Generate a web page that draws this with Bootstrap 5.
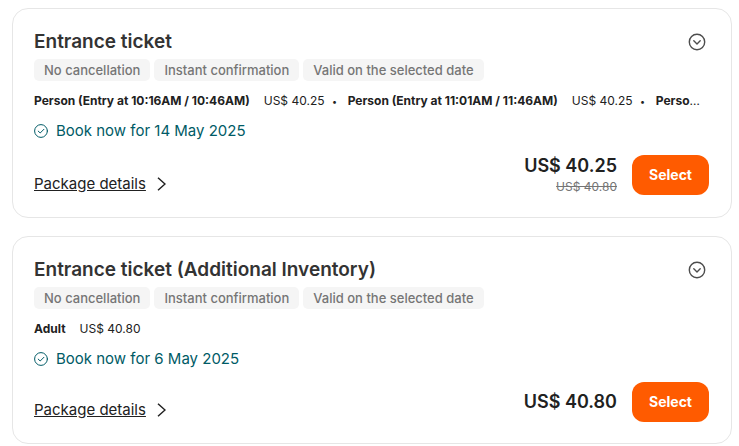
<!DOCTYPE html>
<html lang="en">
<head>
<meta charset="utf-8">
<meta name="viewport" content="width=device-width, initial-scale=1">
<title>Ticket packages</title>
<link href="https://cdn.jsdelivr.net/npm/bootstrap@5.3.0/dist/css/bootstrap.min.css" rel="stylesheet">
<style>
body { font-family: "Inter", sans-serif; color: #212121; background: #fff; }
.package-list { padding: 8px 7px 2px 12px; gap: 18px; }
.package { border: 1px solid #e6e6e6; border-radius: 16px; padding: 19px 22px 21px 21px; }
.package-title { font-size: 19px; line-height: 28px; font-weight: 600; color: #333; }
.toggle { color: #4d4d4d; width: 24px; height: 24px; }
.tag-row { gap: 4px; margin-top: 3px; }
.tag { font-size: 13px; line-height: 22px; font-weight: 500; color: #757575; background: #f5f5f5; border-radius: 5px; padding: 0 10px; }
.options { font-size: 12px; line-height: 20px; margin-top: 10px; margin-right: 5px; }
.options b { font-weight: 700; }
.options .amount { margin-left: 14px; }
.options .dot { font-size: 9px; line-height: 1; margin: 0 8px 0 5px; }
.availability { font-size: 15px; line-height: 20px; margin-top: 10px; gap: 8px; color: #005b66; }
.package-foot { margin-top: 13px; }
.details { font-size: 15px; line-height: 24px; gap: 11px; color: #212121; }
.details:hover { color: #ff5b00; }
.price { font-size: 18px; line-height: 24px; font-weight: 600; }
.old-price { font-size: 12px; line-height: 18px; color: #757575; }
.buy { gap: 15px; }
.btn-select { --bs-btn-color: #fff; --bs-btn-bg: #ff5b00; --bs-btn-hover-color: #fff; --bs-btn-hover-bg: #e65200; --bs-btn-active-color: #fff; --bs-btn-active-bg: #cc4900; font-size: 14px; line-height: 20px; font-weight: 700; padding: 10px 15px; border: 0; border-radius: 12px; min-width: 77px; }
</style>
</head>
<body>
<main class="package-list d-flex flex-column">
  <article class="package">
    <div class="d-flex justify-content-between align-items-center">
      <h2 class="package-title mb-0">Entrance ticket</h2>
      <button type="button" class="toggle btn p-0 border-0 d-flex align-items-center justify-content-center" aria-label="Expand Entrance ticket">
        <svg width="18" height="18" viewBox="0 0 18 18" fill="none" stroke="currentColor" stroke-width="1.4" stroke-linecap="round" stroke-linejoin="round"><circle cx="9" cy="9" r="7.7"/><path d="M5.8 7.8 9 10.9l3.2-3.1"/></svg>
      </button>
    </div>
    <div class="tag-row d-flex flex-wrap">
      <span class="tag">No cancellation</span>
      <span class="tag">Instant confirmation</span>
      <span class="tag">Valid on the selected date</span>
    </div>
    <div class="options text-truncate"><b>Person (Entry at 10:16AM / 10:46AM)</b><span class="amount">US$ 40.25</span><span class="dot"> • </span><b>Person (Entry at 11:01AM / 11:46AM)</b><span class="amount">US$ 40.25</span><span class="dot"> • </span><b>Person (Entry)</b></div>
    <div class="availability d-flex align-items-center">
      <svg width="14" height="14" viewBox="0 0 14 14" fill="none" stroke="currentColor" stroke-width="1" stroke-linecap="round" stroke-linejoin="round"><circle cx="7" cy="7" r="6.4"/><path d="m4.2 7.1 2 1.9 3.7-3.7"/></svg>
      <span>Book now for 14 May 2025</span>
    </div>
    <div class="package-foot d-flex justify-content-between align-items-end">
      <a href="#" class="details d-flex align-items-center text-decoration-none">
        <span class="text-decoration-underline">Package details</span>
        <svg width="9" height="14" viewBox="0 0 9 14" fill="none" stroke="currentColor" stroke-width="1.5"><path d="m1 .8 7 6.2-7 6.2"/></svg>
      </a>
      <div class="buy d-flex align-items-center">
        <div class="text-end">
          <div class="price">US$ 40.25</div>
          <div class="old-price"><s>US$ 40.80</s></div>
        </div>
        <button type="button" class="btn btn-select">Select</button>
      </div>
    </div>
  </article>
  <article class="package">
    <div class="d-flex justify-content-between align-items-center">
      <h2 class="package-title mb-0">Entrance ticket (Additional Inventory)</h2>
      <button type="button" class="toggle btn p-0 border-0 d-flex align-items-center justify-content-center" aria-label="Expand Entrance ticket (Additional Inventory)">
        <svg width="18" height="18" viewBox="0 0 18 18" fill="none" stroke="currentColor" stroke-width="1.4" stroke-linecap="round" stroke-linejoin="round"><circle cx="9" cy="9" r="7.7"/><path d="M5.8 7.8 9 10.9l3.2-3.1"/></svg>
      </button>
    </div>
    <div class="tag-row d-flex flex-wrap">
      <span class="tag">No cancellation</span>
      <span class="tag">Instant confirmation</span>
      <span class="tag">Valid on the selected date</span>
    </div>
    <div class="options text-truncate"><b>Adult</b><span class="amount">US$ 40.80</span></div>
    <div class="availability d-flex align-items-center">
      <svg width="14" height="14" viewBox="0 0 14 14" fill="none" stroke="currentColor" stroke-width="1" stroke-linecap="round" stroke-linejoin="round"><circle cx="7" cy="7" r="6.4"/><path d="m4.2 7.1 2 1.9 3.7-3.7"/></svg>
      <span>Book now for 6 May 2025</span>
    </div>
    <div class="package-foot d-flex justify-content-between align-items-end">
      <a href="#" class="details d-flex align-items-center text-decoration-none">
        <span class="text-decoration-underline">Package details</span>
        <svg width="9" height="14" viewBox="0 0 9 14" fill="none" stroke="currentColor" stroke-width="1.5"><path d="m1 .8 7 6.2-7 6.2"/></svg>
      </a>
      <div class="buy d-flex align-items-center">
        <div class="price">US$ 40.80</div>
        <button type="button" class="btn btn-select">Select</button>
      </div>
    </div>
  </article>
</main>
<script src="https://cdn.jsdelivr.net/npm/bootstrap@5.3.0/dist/js/bootstrap.bundle.min.js"></script>
</body>
</html>
